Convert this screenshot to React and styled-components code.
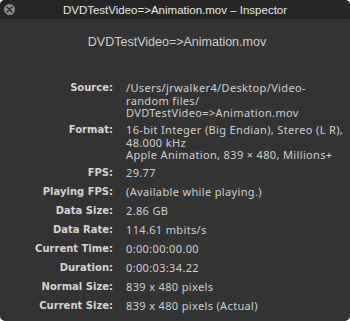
import React from "react";
import styled, { createGlobalStyle } from "styled-components";

const Global = createGlobalStyle`
  html, body { margin: 0; padding: 0; background: #ffffff; }
  body { width: 350px; height: 321px; overflow: hidden; }
`;

const Window = styled.div`
  width: 350px;
  height: 321px;
  background: #333333;
  border-radius: 5px;
  overflow: hidden;
  display: flex;
  flex-direction: column;
  font-family: "DejaVu Sans", "Liberation Sans", sans-serif;
`;

const TitleBar = styled.div`
  position: relative;
  height: 19px;
  flex: none;
  background: #262626;
  display: flex;
  align-items: center;
  justify-content: center;
  font-family: "Liberation Sans", Arial, sans-serif;
  font-size: 11.5px;
  color: #e8e8e8;
`;

const CloseButton = styled.div`
  position: absolute;
  left: 4px;
  top: 4px;
  width: 11px;
  height: 11px;
  border-radius: 50%;
  background: #8b8b8b;
  display: flex;
  align-items: center;
  justify-content: center;
`;

const Heading = styled.div`
  padding-top: 16px;
  height: 30px;
  text-align: center;
  font-family: "Liberation Sans", Arial, sans-serif;
  font-size: 12.5px;
  color: #cfcfcf;
  padding-left: 4px;
`;

const Table = styled.div`
  display: grid;
  grid-template-columns: 113px 1fr;
  column-gap: 13px;
  padding-top: 17px;
  padding-right: 4px;
  line-height: 12.6px;
`;

const Label = styled.div`
  text-align: right;
  font-weight: bold;
  font-size: 10px;
  color: #d4d4d4;
  padding-bottom: 4.5px;
  box-sizing: border-box;
`;

const Value = styled.div`
  color: #d0d0d0;
  font-family: "Noto Sans", "DejaVu Sans", sans-serif;
  font-size: 11px;
  letter-spacing: 0.35px;
  white-space: nowrap;
  min-height: 19px;
  padding-bottom: 4.5px;
  box-sizing: border-box;
`;

const rows = [
  ["Source:", ["/Users/jrwalker4/Desktop/Video-", "random files/", "DVDTestVideo=>Animation.mov"]],
  ["Format:", ["16-bit Integer (Big Endian), Stereo (L R),", "48.000 kHz", "Apple Animation, 839 \u00d7 480, Millions+"]],
  ["FPS:", ["29.77"]],
  ["Playing FPS:", ["(Available while playing.)"]],
  ["Data Size:", ["2.86 GB"]],
  ["Data Rate:", ["114.61 mbits/s"]],
  ["Current Time:", ["0:00:00:00.00"]],
  ["Duration:", ["0:00:03:34.22"]],
  ["Normal Size:", ["839 x 480 pixels"]],
  ["Current Size:", ["839 x 480 pixels (Actual)"]],
];

export default function App() {
  return (
    <>
      <Global />
      <Window>
        <TitleBar>
          <CloseButton>
            <svg width="7" height="7" viewBox="0 0 7 7">
              <path d="M1 1 L6 6 M6 1 L1 6" stroke="#2e2e2e" strokeWidth="1.6" strokeLinecap="round" />
            </svg>
          </CloseButton>
          DVDTestVideo=&gt;Animation.mov – Inspector
        </TitleBar>
        <Heading>DVDTestVideo=&gt;Animation.mov</Heading>
        <Table>
          {rows.map(([label, lines]) => (
            <React.Fragment key={label}>
              <Label>{label}</Label>
              <Value>
                {lines.map((l, i) => (
                  <div key={i}>{l}</div>
                ))}
              </Value>
            </React.Fragment>
          ))}
        </Table>
      </Window>
    </>
  );
}
